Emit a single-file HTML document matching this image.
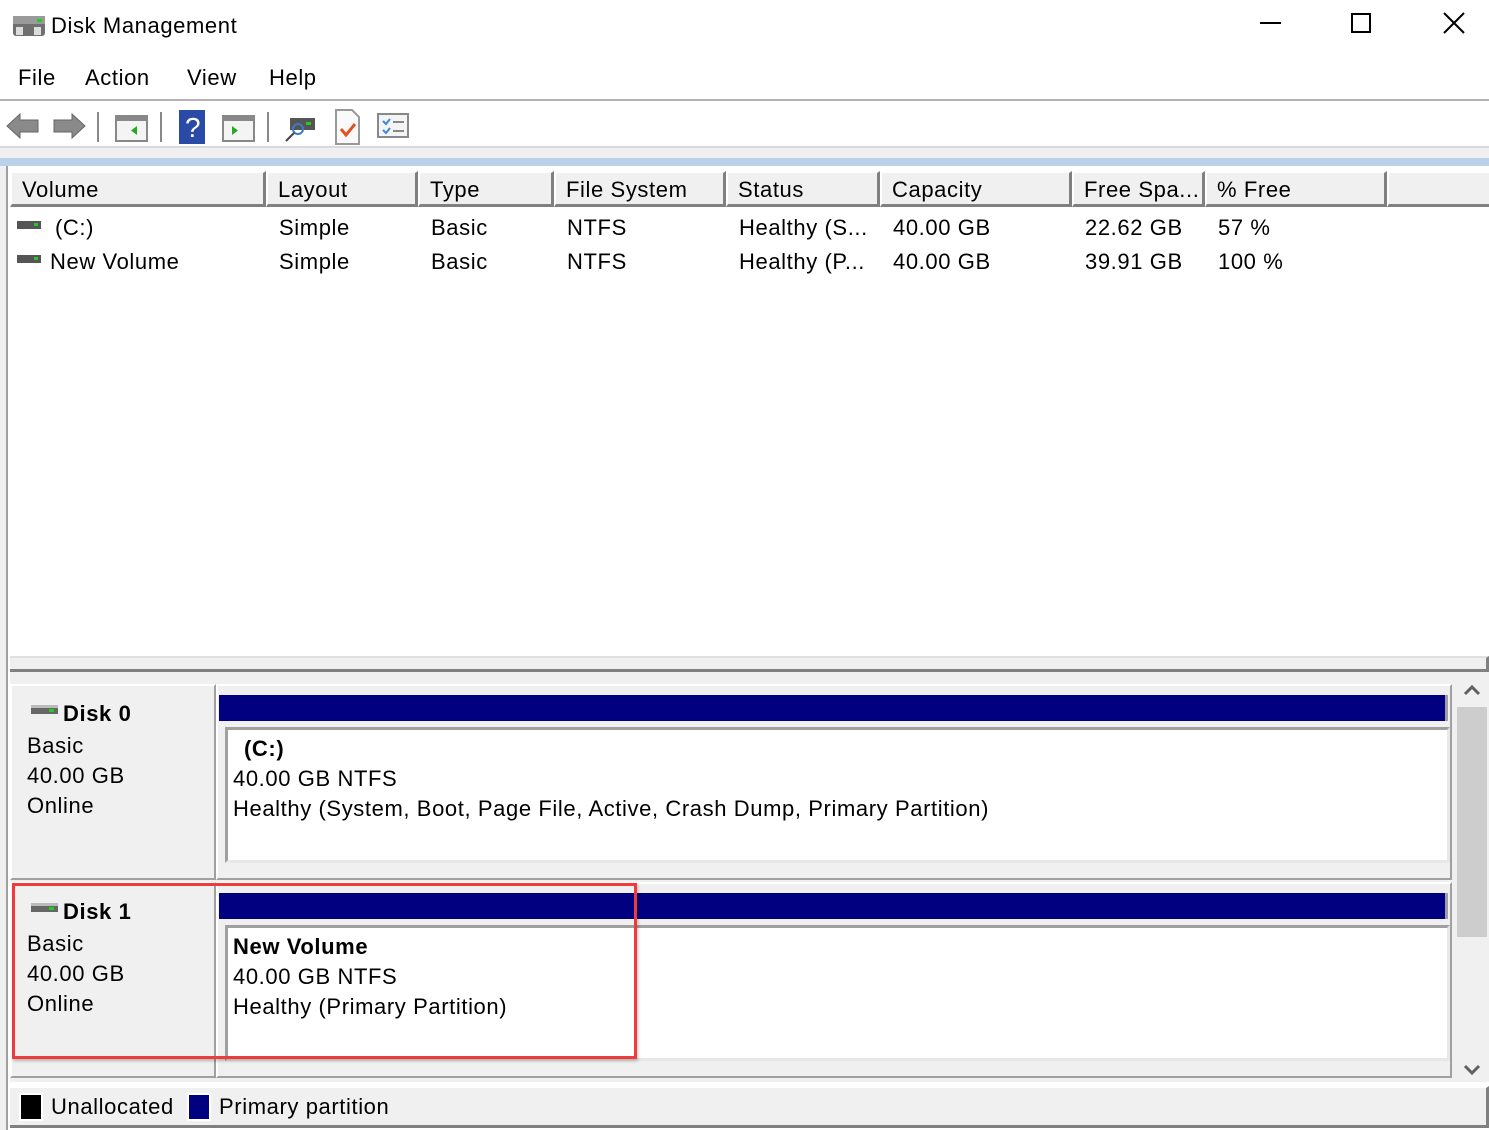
<!DOCTYPE html>
<html><head><style>
*{margin:0;padding:0;box-sizing:border-box}
body{width:1489px;height:1130px;background:#fff;font-family:"Liberation Sans",sans-serif;font-size:22px;letter-spacing:0.6px;color:#000;position:relative;overflow:hidden}
.a{position:absolute;white-space:nowrap}
.hd{position:absolute;top:171px;height:36px;background:#f0f0f0;border-right:3px solid #808080;border-left:2px solid #fff;border-top:2px solid #fff;border-bottom:3px solid #808080;padding:4px 0 0 10px;font-size:22px}
.box{position:absolute;background:#fff;border:3px solid #a0a0a0;border-right-color:#e8e8e8;border-bottom-color:#e8e8e8}
.lbl{position:absolute;background:#f0f0f0;border:2px solid #fff;border-right-color:#a0a0a0;border-bottom-color:#a0a0a0}
</style></head><body>
<svg class="a" style="left:12px;top:12px" width="34" height="28"><rect x="1" y="4" width="32" height="20" rx="3" fill="#707070"/><rect x="1" y="4" width="32" height="8" fill="#9a9a9a"/><rect x="25" y="7" width="5" height="3" fill="#2c2"/><rect x="4" y="15" width="7" height="8" fill="#ddd"/><rect x="22" y="15" width="7" height="8" fill="#ddd"/></svg>
<div class="a" style="left:51px;top:13px">Disk Management</div>
<div class="a" style="left:1260px;top:22px;width:21px;height:2px;background:#000"></div>
<div class="a" style="left:1351px;top:13px;width:20px;height:20px;border:2px solid #000"></div>
<svg class="a" style="left:1443px;top:12px" width="22" height="22"><path d="M1 1L21 21M21 1L1 21" stroke="#000" stroke-width="2"/></svg>
<div class="a" style="left:18px;top:65px">File</div>
<div class="a" style="left:85px;top:65px">Action</div>
<div class="a" style="left:187px;top:65px">View</div>
<div class="a" style="left:269px;top:65px">Help</div>
<div class="a" style="left:0;top:99px;width:1489px;height:2px;background:#b4b4b4"></div>
<svg class="a" style="left:0;top:104px" width="420" height="42">
<path d="M7 22L20 10V16H38V28H20V34Z" fill="#8a8a8a" stroke="#666"/>
<path d="M85 22L72 10V16H54V28H72V34Z" fill="#8a8a8a" stroke="#666"/>
<rect x="97" y="8" width="2" height="30" fill="#888"/>
<rect x="116" y="12" width="31" height="25" fill="#f4f4f4" stroke="#888" stroke-width="2"/><rect x="116" y="12" width="31" height="5" fill="#888"/><path d="M137 22V31L131 26.5Z" fill="#2a2"/>
<rect x="160" y="8" width="2" height="30" fill="#888"/>
<rect x="179" y="6" width="26" height="34" fill="#2a4aa8"/><text x="185" y="33" fill="#fff" font-size="28" font-family="Liberation Sans">?</text>
<rect x="223" y="12" width="31" height="25" fill="#f4f4f4" stroke="#888" stroke-width="2"/><rect x="223" y="12" width="31" height="5" fill="#888"/><path d="M232 22V31L238 26.5Z" fill="#2a2"/>
<rect x="267" y="8" width="2" height="30" fill="#888"/>
<rect x="290" y="14" width="25" height="12" fill="#555"/><rect x="306" y="18" width="5" height="3" fill="#2c2"/><circle cx="298" cy="25" r="5" fill="none" stroke="#3a7ac8" stroke-width="2"/><path d="M294 29L286 37" stroke="#444" stroke-width="2"/>
<path d="M336 6H352L359 13V40H336Z" fill="#fafafa" stroke="#999" stroke-width="2"/><path d="M341 25L346 31L355 20" stroke="#e55020" stroke-width="3" fill="none"/>
<rect x="378" y="10" width="30" height="23" fill="#f4f4f4" stroke="#888" stroke-width="2"/><path d="M383 17L386 20L390 15M383 26L386 29L390 24" stroke="#3a8ad8" stroke-width="2" fill="none"/><path d="M393 18H404M393 27H404" stroke="#888" stroke-width="2"/>
</svg>
<div class="a" style="left:0;top:146px;width:1489px;height:2px;background:#dadada"></div>
<div class="a" style="left:0;top:148px;width:1489px;height:10px;background:#f0f0f0"></div>
<div class="a" style="left:0;top:158px;width:1489px;height:8px;background:#b9d1ea"></div>
<div class="a" style="left:0;top:166px;width:8px;height:964px;background:#f0f0f0;border-right:2px solid #a0a0a0"></div>
<div class="hd" style="left:10px;width:256px">Volume</div>
<div class="hd" style="left:266px;width:152px">Layout</div>
<div class="hd" style="left:418px;width:136px">Type</div>
<div class="hd" style="left:554px;width:172px">File System</div>
<div class="hd" style="left:726px;width:154px">Status</div>
<div class="hd" style="left:880px;width:192px">Capacity</div>
<div class="hd" style="left:1072px;width:133px">Free Spa...</div>
<div class="hd" style="left:1205px;width:182px">% Free</div>
<div class="hd" style="left:1387px;width:102px;border-right:none"></div>
<svg class="a" style="left:17px;top:221px" width="26" height="48"><rect x="0" y="0" width="24" height="8" fill="#555"/><rect x="17" y="2" width="4" height="3" fill="#2c2"/><rect x="0" y="34" width="24" height="8" fill="#555"/><rect x="17" y="36" width="4" height="3" fill="#2c2"/></svg>
<div class="a" style="left:55px;top:215px">(C:)</div>
<div class="a" style="left:50px;top:249px">New Volume</div>
<div class="a" style="left:279px;top:215px">Simple</div><div class="a" style="left:279px;top:249px">Simple</div>
<div class="a" style="left:431px;top:215px">Basic</div><div class="a" style="left:431px;top:249px">Basic</div>
<div class="a" style="left:567px;top:215px">NTFS</div><div class="a" style="left:567px;top:249px">NTFS</div>
<div class="a" style="left:739px;top:215px">Healthy (S...</div><div class="a" style="left:739px;top:249px">Healthy (P...</div>
<div class="a" style="left:893px;top:215px">40.00 GB</div><div class="a" style="left:893px;top:249px">40.00 GB</div>
<div class="a" style="left:1085px;top:215px">22.62 GB</div><div class="a" style="left:1085px;top:249px">39.91 GB</div>
<div class="a" style="left:1218px;top:215px">57 %</div><div class="a" style="left:1218px;top:249px">100 %</div>
<div class="a" style="left:10px;top:656px;width:1479px;height:16px;background:#f0f0f0;border-top:2px solid #e0e0e0;border-bottom:3px solid #808080;border-right:3px solid #808080"></div>
<div class="a" style="left:10px;top:672px;width:1479px;height:410px;background:#f0f0f0"></div>
<div class="lbl" style="left:10px;top:684px;width:206px;height:196px"></div>
<svg class="a" style="left:31px;top:702px" width="28" height="16"><rect x="0" y="3" width="27" height="9" fill="#666"/><rect x="0" y="3" width="27" height="3" fill="#bbb"/><rect x="18" y="7" width="5" height="3" fill="#2c2"/></svg>
<div class="a" style="left:63px;top:701px;font-weight:bold">Disk 0</div>
<div class="a" style="left:27px;top:731px;line-height:30px">Basic<br>40.00 GB<br>Online</div>
<div class="a" style="left:216px;top:684px;width:1236px;height:196px;border:2px solid #fff;border-right-color:#a0a0a0;border-bottom-color:#a0a0a0"></div>
<div class="a" style="left:219px;top:695px;width:1229px;height:26px;background:#000080;border-right:3px solid #a0a0a0"></div>
<div class="box" style="left:225px;top:727px;width:1225px;height:136px"></div>
<div class="a" style="left:244px;top:736px;font-weight:bold">(C:)</div>
<div class="a" style="left:233px;top:764px;line-height:30px">40.00 GB NTFS<br>Healthy (System, Boot, Page File, Active, Crash Dump, Primary Partition)</div>
<div class="lbl" style="left:10px;top:882px;width:206px;height:196px"></div>
<svg class="a" style="left:31px;top:900px" width="28" height="16"><rect x="0" y="3" width="27" height="9" fill="#666"/><rect x="0" y="3" width="27" height="3" fill="#bbb"/><rect x="18" y="7" width="5" height="3" fill="#2c2"/></svg>
<div class="a" style="left:63px;top:899px;font-weight:bold">Disk 1</div>
<div class="a" style="left:27px;top:929px;line-height:30px">Basic<br>40.00 GB<br>Online</div>
<div class="a" style="left:216px;top:882px;width:1236px;height:196px;border:2px solid #fff;border-right-color:#a0a0a0;border-bottom-color:#a0a0a0"></div>
<div class="a" style="left:219px;top:893px;width:1229px;height:26px;background:#000080;border-right:3px solid #a0a0a0"></div>
<div class="box" style="left:225px;top:925px;width:1225px;height:136px"></div>
<div class="a" style="left:233px;top:934px;font-weight:bold">New Volume</div>
<div class="a" style="left:233px;top:962px;line-height:30px">40.00 GB NTFS<br>Healthy (Primary Partition)</div>
<div class="a" style="left:12px;top:883px;width:625px;height:176px;border:3px solid #ee3c3c;box-shadow:1px 2px 3px rgba(0,0,0,.25)"></div>
<div class="a" style="left:1456px;top:680px;width:32px;height:400px;background:#f0f0f0"></div>
<div class="a" style="left:1457px;top:707px;width:30px;height:230px;background:#cdcdcd"></div>
<svg class="a" style="left:1463px;top:684px" width="18" height="12"><path d="M2 10L9 3L16 10" stroke="#606060" stroke-width="3" fill="none"/></svg>
<svg class="a" style="left:1463px;top:1064px" width="18" height="12"><path d="M2 2L9 9L16 2" stroke="#606060" stroke-width="3" fill="none"/></svg>
<div class="a" style="left:10px;top:1086px;width:1479px;height:42px;background:#f0f0f0;border-top:2px solid #fff;border-right:3px solid #808080;border-bottom:3px solid #808080"></div>
<div class="a" style="left:19px;top:1093px;width:24px;height:28px;background:#000;border:2px solid #fff"></div>
<div class="a" style="left:51px;top:1094px">Unallocated</div>
<div class="a" style="left:187px;top:1093px;width:24px;height:28px;background:#000080;border:2px solid #fff"></div>
<div class="a" style="left:219px;top:1094px">Primary partition</div>
</body></html>
